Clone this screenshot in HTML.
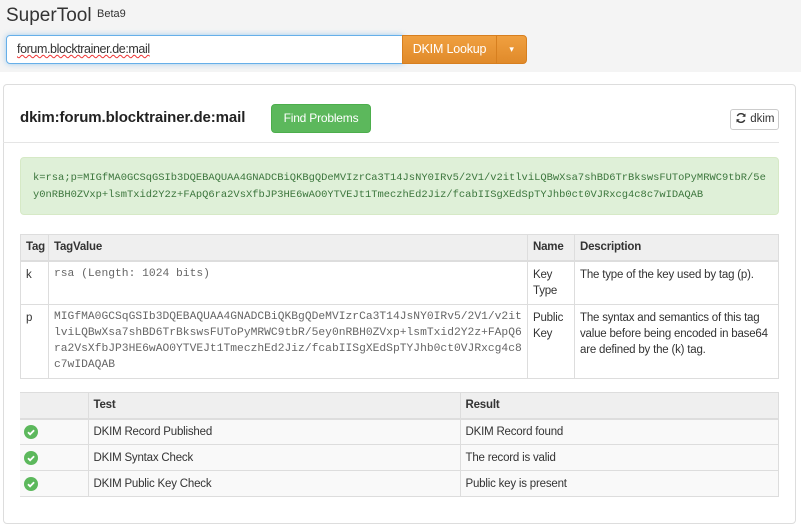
<!DOCTYPE html>
<html><head><style>
*{box-sizing:border-box;margin:0;padding:0}
body{width:801px;height:512px;overflow:hidden;background:#fff;font-family:"Liberation Sans",Arial,sans-serif;color:#333;font-size:12px;position:relative}
.top{position:absolute;left:0;top:0;width:801px;height:72px;background:#f4f4f4}
.brand{position:absolute;left:6px;top:5px;font-size:19px;color:#333}
.beta{position:absolute;left:97px;top:8px;font-size:11px;color:#333}
.inp{position:absolute;left:6px;top:35px;width:397px;height:29px;border:1px solid #66afe9;border-radius:4px 0 0 4px;box-shadow:0 0 6px rgba(102,175,233,.6);background:#fff;font-size:12.5px;padding:6px 10px;letter-spacing:-.4px}
.inp span{text-decoration:underline wavy #e33;text-decoration-thickness:1px}
.btn{position:absolute;top:35px;height:29px;background:linear-gradient(#f0a040,#e08a2a);border:1px solid #d77f1f;color:#fff;font-size:12.5px;line-height:27px;text-align:center;letter-spacing:-.2px}
.panel{position:absolute;left:3px;top:84px;width:793px;height:440px;border:1px solid #ddd;border-radius:4px}
.hr{position:absolute;left:3px;top:142px;width:776px;border-top:1px solid #e5e5e5}
h3{position:absolute;left:20px;top:109px;font-size:15px;font-weight:bold;color:#222;letter-spacing:-.1px}
.fp{position:absolute;left:271px;top:104px;width:100px;height:29px;background:#5cb85c;border:1px solid #4cae4c;border-radius:4px;color:#fff;font-size:12px;line-height:27px;text-align:center;letter-spacing:-.2px}
.dk{position:absolute;left:730px;top:109px;width:49px;height:21px;border:1px solid #ccc;border-radius:3px;font-size:11.5px;line-height:19px;padding-left:4px}
.green{position:absolute;left:20px;top:157px;width:759px;height:58px;background:#dff0d8;border:1px solid #d6e9c6;border-radius:4px;color:#3c763d;font-family:"Liberation Mono",monospace;font-size:10.45px;line-height:17px;padding:12px 12px;word-break:break-all}
table{position:absolute;border-collapse:collapse;font-size:11.5px;letter-spacing:-.2px;table-layout:fixed}
td,th{border:1px solid #ddd;vertical-align:top;padding:5px 5px;text-align:left;line-height:16px}
th{background:#efefef;font-weight:bold;border-bottom:2px solid #ddd;padding:4px 5px}
.m{font-family:"Liberation Mono",monospace;font-size:11.3px;color:#666;line-height:16px;word-break:break-all;letter-spacing:0;padding:4px 5px}
.t2 td{background:#f9f9f9;padding:4px 5px;line-height:16px;vertical-align:middle}
.t2 tr{height:26px}
.ck{display:block;width:14px;height:14px;border-radius:50%;background:#5cb85c;margin-left:-1px}
.ck svg{display:block}
</style></head><body>
<div class="top"></div>
<div class="brand">SuperTool</div><div class="beta">Beta9</div>
<div class="inp"><span>forum.blocktrainer.de:mail</span></div>
<div class="btn" style="left:402px;width:95px;border-radius:0">DKIM Lookup</div>
<div class="btn" style="left:496px;width:31px;border-radius:0 4px 4px 0;font-size:9px">▾</div>
<div class="panel"></div>
<div class="hr"></div>
<h3>dkim:forum.blocktrainer.de:mail</h3>
<div class="fp">Find Problems</div>
<div class="dk"><svg width="12" height="12" viewBox="0 0 12 12" style="vertical-align:-2px"><path d="M10 4.5A4.2 4.2 0 0 0 2.3 4M2 7.5A4.2 4.2 0 0 0 9.7 8" stroke="#333" stroke-width="1.4" fill="none"/><path d="M10.5 1.5v3.3H7.2zM1.5 10.5V7.2h3.3z" fill="#333"/></svg> dkim</div>
<div class="green">k=rsa;p=MIGfMA0GCSqGSIb3DQEBAQUAA4GNADCBiQKBgQDeMVIzrCa3T14JsNY0IRv5/2V1/v2itlviLQBwXsa7shBD6TrBkswsFUToPyMRWC9tbR/5ey0nRBH0ZVxp+lsmTxid2Y2z+FApQ6ra2VsXfbJP3HE6wAO0YTVEJt1TmeczhEd2Jiz/fcabIISgXEdSpTYJhb0ct0VJRxcg4c8c7wIDAQAB</div>
<table style="left:20px;top:234px;width:759px">
<colgroup><col style="width:28px"><col style="width:479px"><col style="width:47px"><col></colgroup>
<tr style="height:26px"><th>Tag</th><th>TagValue</th><th>Name</th><th>Description</th></tr>
<tr style="height:42px"><td>k</td><td class="m">rsa (Length: 1024 bits)</td><td>Key Type</td><td>The type of the key used by tag (p).</td></tr>
<tr style="height:74px"><td>p</td><td class="m">MIGfMA0GCSqGSIb3DQEBAQUAA4GNADCBiQKBgQDeMVIzrCa3T14JsNY0IRv5/2V1/v2itlviLQBwXsa7shBD6TrBkswsFUToPyMRWC9tbR/5ey0nRBH0ZVxp+lsmTxid2Y2z+FApQ6ra2VsXfbJP3HE6wAO0YTVEJt1TmeczhEd2Jiz/fcabIISgXEdSpTYJhb0ct0VJRxcg4c8c7wIDAQAB</td><td>Public Key</td><td>The syntax and semantics of this tag value before being encoded in base64 are defined by the (k) tag.</td></tr>
</table>
<table class="t2" style="left:20px;top:392px;width:759px">
<colgroup><col style="width:68px"><col style="width:372px"><col></colgroup>
<tr><th style="border-left:0"></th><th>Test</th><th>Result</th></tr>
<tr><td style="border-left:0"><span class="ck"><svg width="14" height="14" viewBox="0 0 14 14"><path d="M4 7.2l2.1 2.1 4-4" stroke="#fff" stroke-width="1.8" fill="none"/></svg></span></td><td>DKIM Record Published</td><td>DKIM Record found</td></tr>
<tr><td style="border-left:0"><span class="ck"><svg width="14" height="14" viewBox="0 0 14 14"><path d="M4 7.2l2.1 2.1 4-4" stroke="#fff" stroke-width="1.8" fill="none"/></svg></span></td><td>DKIM Syntax Check</td><td>The record is valid</td></tr>
<tr><td style="border-left:0"><span class="ck"><svg width="14" height="14" viewBox="0 0 14 14"><path d="M4 7.2l2.1 2.1 4-4" stroke="#fff" stroke-width="1.8" fill="none"/></svg></span></td><td>DKIM Public Key Check</td><td>Public key is present</td></tr>
</table>
</body></html>
